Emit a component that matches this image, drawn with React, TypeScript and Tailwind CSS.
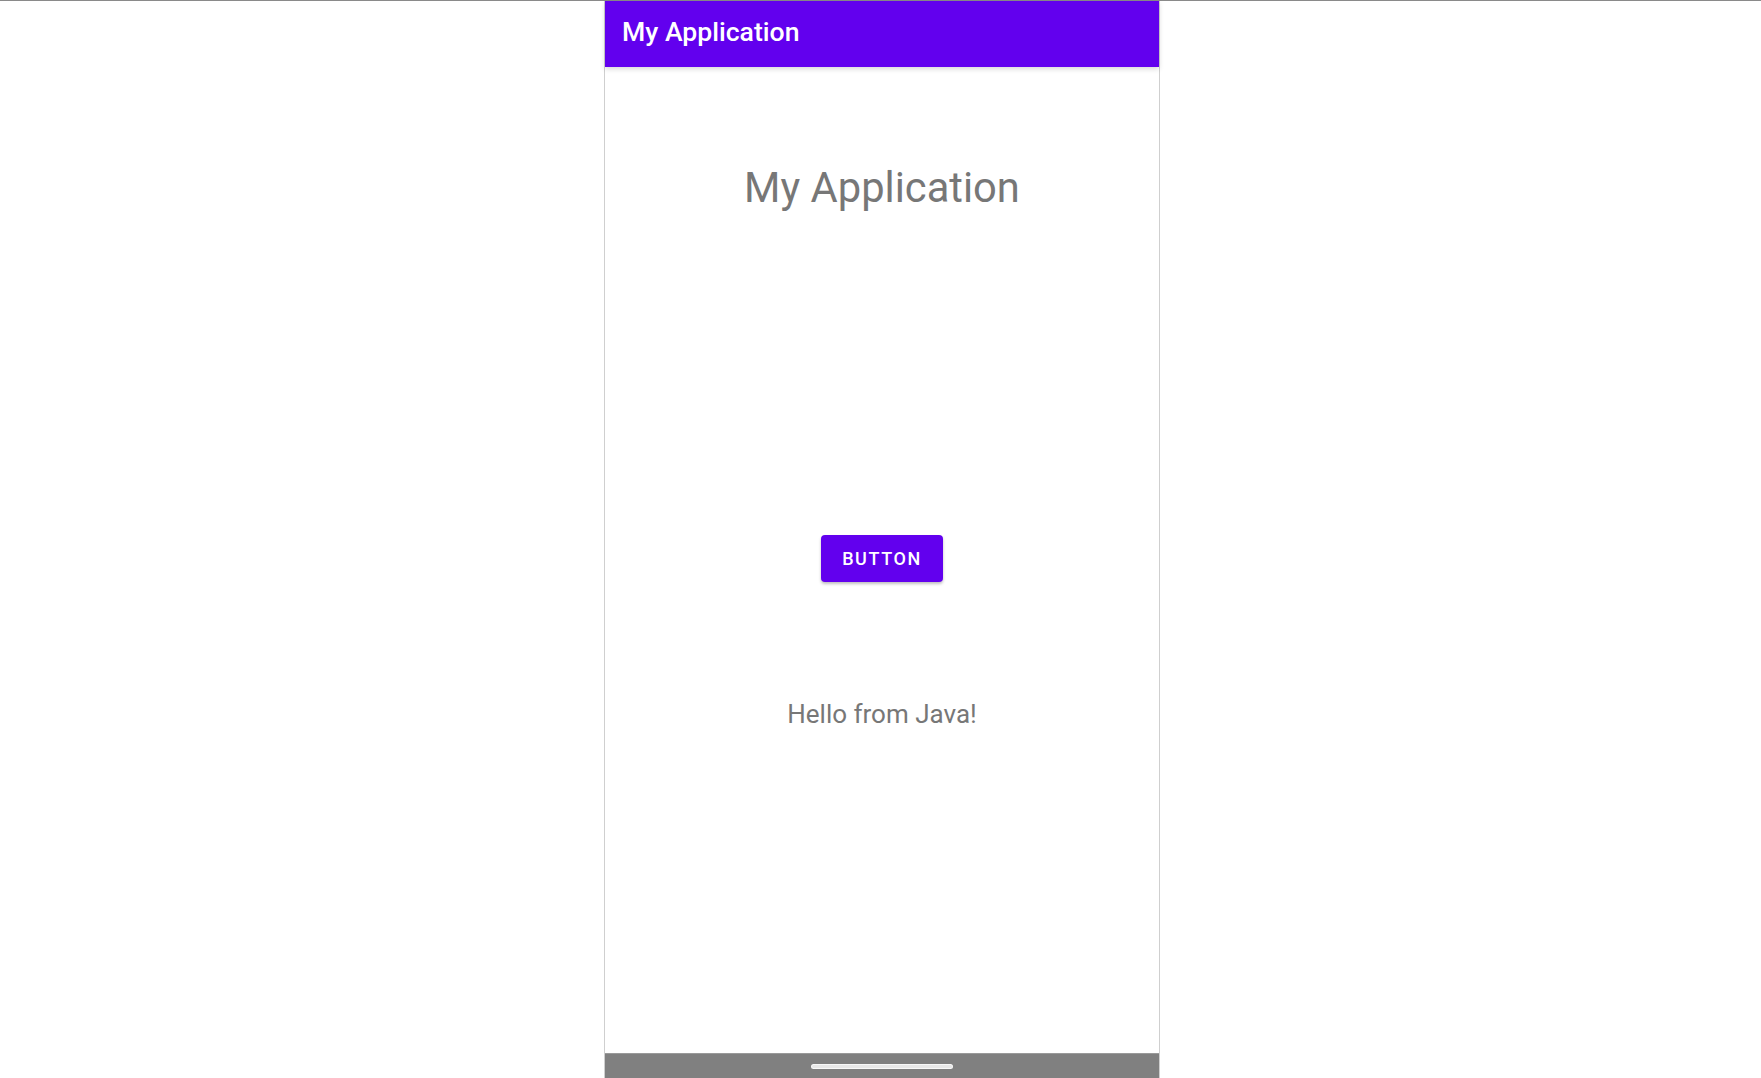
import React from 'react';

const FONT = { fontFamily: 'Roboto, "Noto Sans", sans-serif' };

export default function App() {
  return (
    <div className="h-[1078px] w-full bg-white border-t border-[#8a8a8a] flex justify-center pl-[3px]" style={FONT}>
      {/* device frame */}
      <div className="w-[556px] h-full flex flex-col border-x border-[#cfcfcf]">
        <header className="relative z-10 h-[66px] bg-[#6200ee] pl-[17px] pt-[16px] shadow-[0_2px_5px_rgba(0,0,0,0.16)]">
          <h1 className="text-[26.6px] leading-[30px] font-medium text-white">My Application</h1>
        </header>

        <main className="flex-1 flex flex-col items-center border-b border-[#9a9a9a]">
          <h2 className="mt-[96px] text-[41.7px] leading-[50px] text-[#777777]">My Application</h2>
          <button
            type="button"
            className="mt-[322px] w-[122px] h-[47px] rounded-[4px] bg-[#6200ee] text-white text-[18px] font-medium tracking-[1.6px] shadow-[0_2px_3px_rgba(0,0,0,0.25)]"
          >
            BUTTON
          </button>
          <p className="mt-[117px] text-[26px] leading-[30px] text-[#777777]">Hello from Java!</p>
        </main>

        {/* system navigation bar */}
        <div className="h-[24px] bg-[#808080] flex items-center justify-center">
          <div className="w-[142px] h-[5px] rounded-full bg-[#e8e8e8] border border-white/70" />
        </div>
      </div>
    </div>
  );
}
